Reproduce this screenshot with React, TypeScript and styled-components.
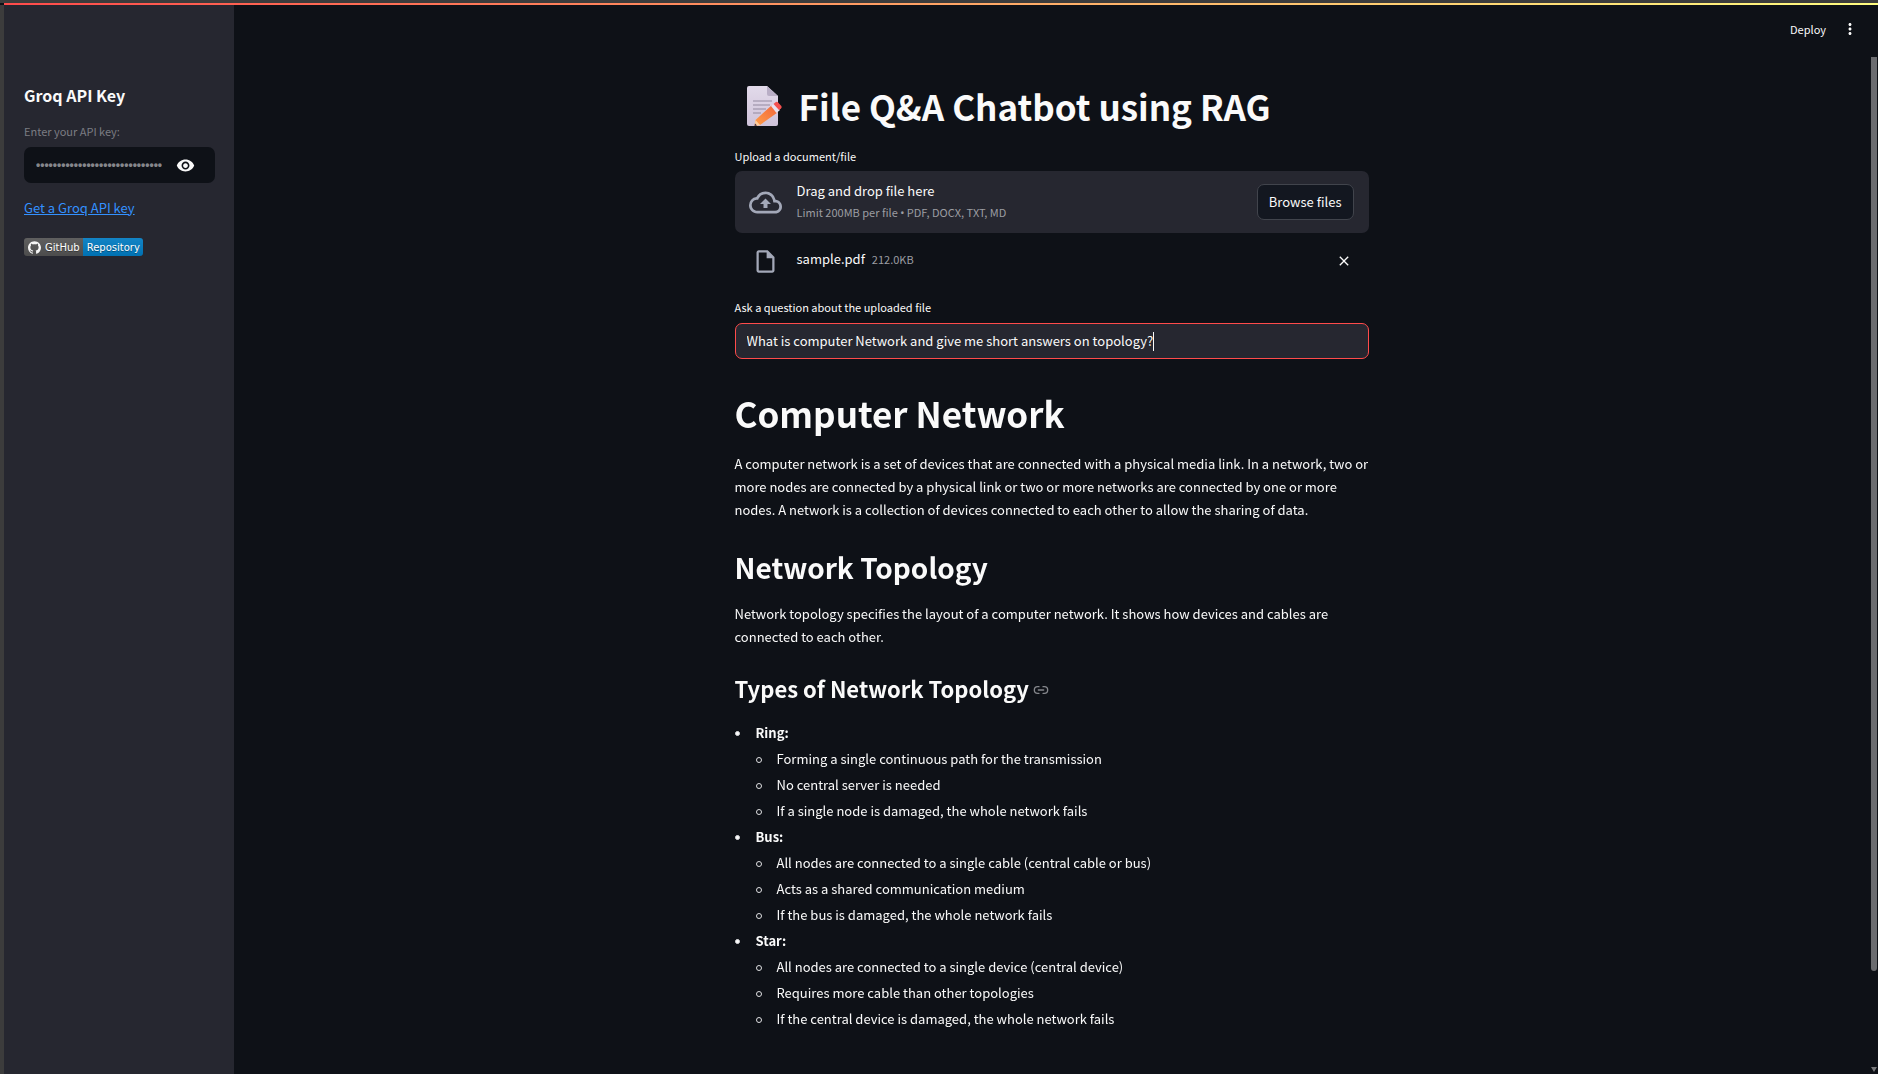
import React, { useEffect, useRef } from "react";
import styled, { createGlobalStyle } from "styled-components";
import { Link2 } from "lucide-react";

const sans = `"Source Sans Pro", "Noto Sans CJK SC", "Noto Sans", sans-serif`;

const GlobalStyle = createGlobalStyle`
  * { box-sizing: border-box; }
  body {
    margin: 0;
    background: #0e1117;
    color: #fafafa;
    font-family: ${sans};
    font-size: 13px;
    line-height: 23px;
  }
  button, input { font-family: inherit; font-size: inherit; color: inherit; }
  h1, h2, h3, p, ul { margin: 0; padding: 0; }
`;

const Frame = styled.div`
  display: flex;
  flex-direction: column;
  height: 100vh;
  overflow: hidden;
`;

const WindowEdge = styled.div`
  height: 3px;
  flex: none;
  background: #3c3c3c;
`;

const Decoration = styled.div`
  height: 2px;
  flex: none;
  margin-left: 4px;
  background: linear-gradient(90deg, #ff4b4b, #fffd80);
`;

const Body = styled.div`
  display: flex;
  flex: 1;
  min-height: 0;
  border-left: 4px solid #3c3c3c;
`;

const Sidebar = styled.aside`
  width: 230px;
  flex: none;
  padding: 78px 19px 20px 20px;
  background: #262730;
`;

const SidebarTitle = styled.h2`
  font-size: 16px;
  line-height: 24px;
  font-weight: 600;
`;

const FieldLabel = styled.label<{ $muted?: boolean }>`
  display: block;
  font-size: 11px;
  line-height: 20px;
  color: ${(p) => (p.$muted ? "#7c7d83" : "#fafafa")};
`;

const KeyLabel = styled(FieldLabel)`
  margin-top: 14px;
`;

const KeyBox = styled.div`
  display: flex;
  align-items: center;
  height: 36px;
  margin-top: 6px;
  padding: 0 20px 0 12px;
  border-radius: 7px;
  background: #0e1117;
`;

const KeyInput = styled.input`
  flex: 1;
  min-width: 0;
  padding: 0;
  border: 0;
  outline: 0;
  background: transparent;
  color: #85868b;
  font-family: "Liberation Sans", sans-serif;
  font-size: 12px;
  font-weight: 700;
`;

const IconButton = styled.button`
  display: flex;
  align-items: center;
  justify-content: center;
  padding: 0;
  border: 0;
  background: transparent;
  cursor: pointer;
`;

const EyeButton = styled(IconButton)`
  margin-left: 14px;
`;

const KeyLink = styled.a`
  display: block;
  margin-top: 13px;
  color: #3391ff;
  text-decoration: underline;
`;

const Badge = styled.a`
  display: inline-flex;
  height: 18px;
  margin-top: 19px;
  border-radius: 3px;
  overflow: hidden;
  color: #fff;
  font: 10px/17px "DejaVu Sans", sans-serif;
  text-decoration: none;
  text-shadow: 0 1px 0 rgba(1, 1, 1, 0.35);
`;

const BadgePart = styled.span<{ $blue?: boolean }>`
  display: flex;
  align-items: center;
  gap: 4px;
  padding: 1px 3px 0 4px;
  background: linear-gradient(rgba(187, 187, 187, 0.1), rgba(0, 0, 0, 0.1)),
    ${(p) => (p.$blue ? "#007ec6" : "#555")};
`;

const Main = styled.div`
  display: flex;
  flex-direction: column;
  flex: 1;
  min-width: 0;
`;

const Toolbar = styled.header`
  display: flex;
  align-items: center;
  justify-content: flex-end;
  gap: 15px;
  height: 52px;
  flex: none;
  padding: 0 19px 4px 0;
`;

const DeployButton = styled.button`
  padding: 0;
  border: 0;
  background: transparent;
  font-size: 11px;
  line-height: 20px;
  cursor: pointer;
`;

const ScrollArea = styled.div`
  display: flex;
  flex: 1;
  min-height: 0;
`;

const Content = styled.main`
  flex: 1;
  min-width: 0;
  padding-right: 2px;
`;

const Column = styled.div`
  max-width: 634px;
  margin: 0 auto;
  padding-top: 25px;
`;

const ScrollTrack = styled.div`
  display: flex;
  flex-direction: column;
  justify-content: space-between;
  width: 6px;
  flex: none;
  margin: 0 1px 2px 0;
`;

const ScrollThumb = styled.div`
  height: 90%;
  border-radius: 0 0 3px 3px;
  background: #6b6c70;
`;

const ScrollArrow = styled.div`
  border: 3px solid transparent;
  border-top: 5px solid #77787b;
  border-bottom: 0;
`;

const PageTitle = styled.h1`
  display: flex;
  align-items: center;
  gap: 17px;
  padding-left: 12px;
  font-size: 35px;
  line-height: 48px;
  font-weight: 700;
`;

const UploadLabel = styled(FieldLabel)`
  margin-top: 16px;
`;

const Dropzone = styled.section`
  display: flex;
  align-items: center;
  height: 62px;
  margin-top: 5px;
  padding: 0 15px 0 14px;
  border-radius: 7px;
  background: #262730;
`;

const DropText = styled.div`
  flex: 1;
  margin-left: 15px;
  padding-bottom: 3px;
`;

const Hint = styled.div`
  font-size: 11px;
  line-height: 20px;
  color: #9c9da2;
`;

const Bullet = styled.span`
  font-family: "Noto Sans", sans-serif;
`;

const BrowseButton = styled.button`
  height: 36px;
  padding: 0 11px 1px;
  border: 1px solid #41444c;
  border-radius: 7px;
  background: #131720;
  cursor: pointer;
`;

const FileRow = styled.div`
  display: flex;
  align-items: center;
  height: 28px;
  margin-top: 14px;
  padding: 0 17px;
`;

const FileInfo = styled.div`
  display: flex;
  align-items: baseline;
  flex: 1;
  gap: 7px;
  margin-left: 18px;
  padding-bottom: 4px;
`;

const FileSize = styled.span`
  font-size: 11px;
  color: #9c9da2;
`;

const QuestionLabel = styled(FieldLabel)`
  margin-top: 22px;
`;

const QuestionBox = styled.div`
  display: flex;
  align-items: center;
  height: 36px;
  margin-top: 6px;
  padding: 0 11px;
  border: 1px solid #ff4b4b;
  border-radius: 7px;
  background: #262730;
`;

const QuestionInput = styled.input`
  field-sizing: content;
  min-width: 8px;
  max-width: 100%;
  height: 34px;
  padding: 0 0 2px;
  border: 0;
  outline: 0;
  background: transparent;
  caret-color: transparent;
`;

const Caret = styled.span`
  width: 1px;
  height: 19px;
  flex: none;
  background: #fafafa;
`;

const Answer = styled.article`
  padding-top: 30px;
`;

const Title = styled.h1`
  font-size: 35px;
  line-height: 48px;
  font-weight: 700;
`;

const Paragraph = styled.p`
  margin-top: 15px;
`;

const Section = styled.h2`
  margin-top: 26px;
  font-size: 28px;
  line-height: 40px;
  font-weight: 600;
`;

const SubSection = styled.h3`
  display: flex;
  align-items: center;
  gap: 4px;
  margin-top: 24px;
  font-size: 22px;
  line-height: 32px;
  font-weight: 600;
`;

const Anchor = styled.a`
  display: flex;
  padding-top: 4px;
  color: #85878c;
`;

const List = styled.ul<{ $nested?: boolean }>`
  margin-top: ${(p) => (p.$nested ? "0" : "16px")};
  list-style: none;
  line-height: 26px;
`;

const Item = styled.li`
  display: grid;
  grid-template-columns: 21px 1fr;
  align-items: start;
`;

const Marker = styled.span<{ $hollow?: boolean }>`
  width: ${(p) => (p.$hollow ? "6px" : "5px")};
  height: ${(p) => (p.$hollow ? "6px" : "5px")};
  margin-top: 11px;
  border: 1px solid #e0e1e3;
  border-radius: 50%;
  background: ${(p) => (p.$hollow ? "transparent" : "#fafafa")};
`;

const topologies = [
  {
    name: "Ring:",
    facts: [
      "Forming a single continuous path for the transmission",
      "No central server is needed",
      "If a single node is damaged, the whole network fails",
    ],
  },
  {
    name: "Bus:",
    facts: [
      "All nodes are connected to a single cable (central cable or bus)",
      "Acts as a shared communication medium",
      "If the bus is damaged, the whole network fails",
    ],
  },
  {
    name: "Star:",
    facts: [
      "All nodes are connected to a single device (central device)",
      "Requires more cable than other topologies",
      "If the central device is damaged, the whole network fails",
    ],
  },
];

const Glyph = ({ size, color, d }: { size: number; color: string; d: string }) => (
  <svg width={size} height={size} viewBox="0 0 24 24" fill={color} aria-hidden="true">
    <path d={d} />
  </svg>
);

const CLOUD =
  "M19.35 10.04A7.49 7.49 0 0 0 12 4C9.11 4 6.6 5.64 5.35 8.04A5.994 5.994 0 0 0 0 14c0 3.31 2.69 6 6 6h13c2.76 0 5-2.24 5-5 0-2.64-2.05-4.78-4.65-4.96zM19 18H6c-2.21 0-4-1.79-4-4 0-2.05 1.53-3.76 3.56-3.97l1.07-.11.5-.95A5.469 5.469 0 0 1 12 6c2.62 0 4.88 1.86 5.39 4.43l.3 1.5 1.53.11A2.98 2.98 0 0 1 22 15c0 1.65-1.35 3-3 3zM8 13h2.55v3h2.9v-3H16l-4-4z";
const FILE =
  "M14 2H6c-1.1 0-1.99.9-1.99 2L4 20c0 1.1.89 2 1.99 2H18c1.1 0 2-.9 2-2V8l-6-6zM6 20V4h7v5h5v11H6z";
const CLOSE =
  "M19 6.41 17.59 5 12 10.59 6.41 5 5 6.41 10.59 12 5 17.59 6.41 19 12 13.41 17.59 19 19 17.59 13.41 12z";
const EYE =
  "M12 4.5C7 4.5 2.73 7.61 1 12c1.73 4.39 6 7.5 11 7.5s9.27-3.11 11-7.5c-1.73-4.39-6-7.5-11-7.5zM12 17c-2.76 0-5-2.24-5-5s2.24-5 5-5 5 2.24 5 5-2.24 5-5 5zm0-8c-1.66 0-3 1.34-3 3s1.34 3 3 3 3-1.34 3-3-1.34-3-3-3z";
const DOTS =
  "M12 8c1.1 0 2-.9 2-2s-.9-2-2-2-2 .9-2 2 .9 2 2 2zm0 2c-1.1 0-2 .9-2 2s.9 2 2 2 2-.9 2-2-.9-2-2-2zm0 6c-1.1 0-2 .9-2 2s.9 2 2 2 2-.9 2-2-.9-2-2-2z";
const OCTOCAT =
  "M12 .297c-6.63 0-12 5.373-12 12 0 5.303 3.438 9.8 8.205 11.385.6.113.82-.258.82-.577 0-.285-.01-1.04-.015-2.04-3.338.724-4.042-1.61-4.042-1.61C4.422 18.07 3.633 17.7 3.633 17.7c-1.087-.744.084-.729.084-.729 1.205.084 1.838 1.236 1.838 1.236 1.07 1.835 2.809 1.305 3.495.998.108-.776.417-1.305.76-1.605-2.665-.3-5.466-1.332-5.466-5.93 0-1.31.465-2.38 1.235-3.22-.135-.303-.54-1.523.105-3.176 0 0 1.005-.322 3.3 1.23.96-.267 1.98-.399 3-.405 1.02.006 2.04.138 3 .405 2.28-1.552 3.285-1.23 3.285-1.23.645 1.653.24 2.873.12 3.176.765.84 1.23 1.91 1.23 3.22 0 4.61-2.805 5.625-5.475 5.92.42.36.81 1.096.81 2.22 0 1.606-.015 2.896-.015 3.286 0 .315.21.69.825.57C20.565 22.092 24 17.592 24 12.297c0-6.627-5.373-12-12-12";

const MemoIcon = () => (
  <svg width="35" height="40" viewBox="0 0 35 40" aria-hidden="true">
    <defs>
      <linearGradient id="sheet" x1="0" y1="0" x2="0" y2="1">
        <stop offset="0" stopColor="#e2daea" />
        <stop offset="1" stopColor="#cfc3da" />
      </linearGradient>
      <linearGradient id="wood" x1="0" y1="1" x2="1" y2="0">
        <stop offset="0" stopColor="#ffa04a" />
        <stop offset="1" stopColor="#f2653a" />
      </linearGradient>
    </defs>
    <path d="M2 0h18l11 10v28a2 2 0 0 1-2 2H2a2 2 0 0 1-2-2V2a2 2 0 0 1 2-2z" fill="url(#sheet)" />
    <path d="M20 0l11 10h-9a2 2 0 0 1-2-2z" fill="#b9aec6" />
    <path d="M6 15h19M6 19h17M6 23h13M6 27h8" stroke="#948a9f" strokeWidth="1.2" />
    <path d="M24.500 19.500l6 7L13 39l-5.500 1 1-6z" fill="url(#wood)" />
    <path d="M8.500 34l4.500 5-5.500 1z" fill="#ffce9c" />
    <path d="M8 37.500l2 2.100-2.500.4z" fill="#3b2a45" />
    <path d="M24 20l3-2.500 6 6.500-3.500 3z" fill="#e9e1ef" />
    <path d="M26.500 18l2-1.800a2 2 0 0 1 2.600.2l3 3.300a2 2 0 0 1-.1 2.700L32 24z" fill="#f4504e" />
  </svg>
);

export default function App() {
  const question = useRef<HTMLInputElement>(null);

  useEffect(() => {
    const el = question.current;
    if (el) {
      el.focus();
      el.setSelectionRange(el.value.length, el.value.length);
    }
  }, []);

  return (
    <Frame>
      <GlobalStyle />
      <WindowEdge />
      <Decoration />
      <Body>
        <Sidebar>
          <SidebarTitle>Groq API Key</SidebarTitle>
          <KeyLabel $muted htmlFor="api-key">
            Enter your API key:
          </KeyLabel>
          <KeyBox>
            <KeyInput id="api-key" type="password" defaultValue={"x".repeat(56)} />
            <EyeButton type="button" aria-label="Show password text">
              <Glyph size={19} color="#fafafa" d={EYE} />
            </EyeButton>
          </KeyBox>
          <KeyLink href="#keys">Get a Groq API key</KeyLink>
          <Badge href="#repository">
            <BadgePart>
              <Glyph size={13} color="#f5f5f5" d={OCTOCAT} />
              GitHub
            </BadgePart>
            <BadgePart $blue>Repository</BadgePart>
          </Badge>
        </Sidebar>
        <Main>
          <Toolbar>
            <DeployButton type="button">Deploy</DeployButton>
            <IconButton type="button" aria-label="Main menu">
              <Glyph size={18} color="#fafafa" d={DOTS} />
            </IconButton>
          </Toolbar>
          <ScrollArea>
            <Content>
              <Column>
                <PageTitle>
                  <MemoIcon />
                  File Q&amp;A Chatbot using RAG
                </PageTitle>
                <UploadLabel htmlFor="browse">Upload a document/file</UploadLabel>
                <Dropzone>
                  <Glyph size={33} color="#a3a8b8" d={CLOUD} />
                  <DropText>
                    <div>Drag and drop file here</div>
                    <Hint>
                      Limit 200MB per file <Bullet>•</Bullet> PDF, DOCX, TXT, MD
                    </Hint>
                  </DropText>
                  <BrowseButton id="browse" type="button">
                    Browse files
                  </BrowseButton>
                </Dropzone>
                <FileRow>
                  <Glyph size={27} color="#a3a8b8" d={FILE} />
                  <FileInfo>
                    <span>sample.pdf</span>
                    <FileSize>212.0KB</FileSize>
                  </FileInfo>
                  <IconButton type="button" aria-label="Remove file">
                    <Glyph size={16} color="#fafafa" d={CLOSE} />
                  </IconButton>
                </FileRow>
                <QuestionLabel htmlFor="question">Ask a question about the uploaded file</QuestionLabel>
                <QuestionBox>
                  <QuestionInput
                    id="question"
                    ref={question}
                    type="text"
                    defaultValue="What is computer Network and give me short answers on topology?"
                  />
                  <Caret />
                </QuestionBox>
                <Answer>
                  <Title>Computer Network</Title>
                  <Paragraph>
                    A computer network is a set of devices that are connected with a physical media link. In a network,
                    two or more nodes are connected by a physical link or two or more networks are connected by one or
                    more nodes. A network is a collection of devices connected to each other to allow the sharing of
                    data.
                  </Paragraph>
                  <Section>Network Topology</Section>
                  <Paragraph>
                    Network topology specifies the layout of a computer network. It shows how devices and cables are
                    connected to each other.
                  </Paragraph>
                  <SubSection id="types">
                    Types of Network Topology
                    <Anchor href="#types" aria-label="Link to heading">
                      <Link2 size={16} />
                    </Anchor>
                  </SubSection>
                  <List>
                    {topologies.map((t) => (
                      <Item key={t.name}>
                        <Marker />
                        <div>
                          <strong>{t.name}</strong>
                          <List $nested>
                            {t.facts.map((fact) => (
                              <Item key={fact}>
                                <Marker $hollow />
                                <span>{fact}</span>
                              </Item>
                            ))}
                          </List>
                        </div>
                      </Item>
                    ))}
                  </List>
                </Answer>
              </Column>
            </Content>
            <ScrollTrack aria-hidden="true">
              <ScrollThumb />
              <ScrollArrow />
            </ScrollTrack>
          </ScrollArea>
        </Main>
      </Body>
    </Frame>
  );
}
